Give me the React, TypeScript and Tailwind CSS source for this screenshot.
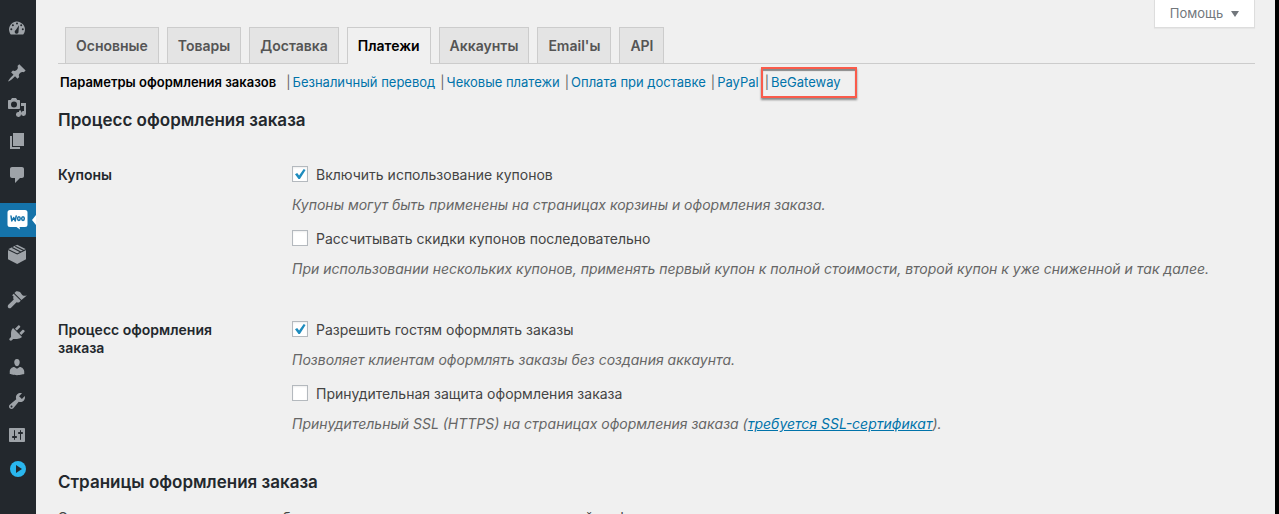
import React from "react";

type IconProps = { children: React.ReactNode; className?: string };

function Glyph({ children, className = "fill-[#9ea3a8]" }: IconProps) {
  return (
    <svg viewBox="0 0 20 20" className={`size-5 ${className}`} aria-hidden="true">
      {children}
    </svg>
  );
}

function MenuLink({ label, children }: { label: string; children: React.ReactNode }) {
  return (
    <a href="#" aria-label={label} className="flex h-[34px] w-full items-center pl-[7px]">
      {children}
    </a>
  );
}

function Sidebar() {
  return (
    <nav className="flex w-9 shrink-0 flex-col bg-[#23282d] pt-[11px]">
      <MenuLink label="Консоль">
        <Glyph>
          <path d="M3.8 16.6h12.4A8 8 0 1 0 2 11c0 2.100.7 4.100 1.800 5.600zM10 4.500a1 1 0 1 1 0 2 1 1 0 0 1 0-2zM5.900 6.300a1 1 0 1 1 0 2 1 1 0 0 1 0-2zm8.300 0a1 1 0 1 1 0 2 1 1 0 0 1 0-2zM4.300 10.200a1 1 0 1 1 0 2 1 1 0 0 1 0-2zm11.500 0a1 1 0 1 1 0 2 1 1 0 0 1 0-2zM12 7.200l-.5 6.300a1.900 1.900 0 1 1-2.700-1.400z" fillRule="evenodd" />
        </Glyph>
      </MenuLink>
      <div className="h-[11px]" />
      <MenuLink label="Записи">
        <Glyph>
          <path d="M10.440 3.020l1.820-1.820 6.360 6.350-1.830 1.820c-1.050-.68-2.480-.57-3.410.36l-.75.75c-.92.93-1.040 2.350-.35 3.410l-1.830 1.820-2.410-2.410-2.800 2.790c-.42.42-3.380 2.710-3.800 2.290s1.860-3.390 2.280-3.810l2.790-2.790L4.100 9.360l1.830-1.820c1.050.69 2.480.57 3.400-.36l.75-.75c.93-.92 1.050-2.350.36-3.410z" />
        </Glyph>
      </MenuLink>
      <MenuLink label="Медиафайлы">
        <Glyph>
          <path fillRule="evenodd" d="M13 11V4c0-.55-.45-1-1-1h-1.670L9 1H5L3.670 3H2c-.55 0-1 .45-1 1v7c0 .55.45 1 1 1h10c.55 0 1-.45 1-1zM7 4.500a3 3 0 1 1 0 6 3 3 0 0 1 0-6zM14 6h5v10.500A2.500 2.500 0 1 1 17 14V9h-3v8.500A2.500 2.500 0 1 1 12 15V13.500h2z" />
        </Glyph>
      </MenuLink>
      <MenuLink label="Страницы">
        <Glyph>
          <path d="M6 15V2h11v13H6zm-1 1h8v2H3V5h2v11z" />
        </Glyph>
      </MenuLink>
      <MenuLink label="Комментарии">
        <Glyph>
          <path d="M5 2h10c1.100 0 2 .9 2 2v7c0 1.100-.9 2-2 2h-2l-5 5v-5H5c-1.100 0-2-.9-2-2V4c0-1.100.9-2 2-2z" />
        </Glyph>
      </MenuLink>
      <div className="h-[11px]" />
      <a href="#" aria-label="WooCommerce" className="flex h-[34px] items-center bg-[#1573aa]">
        <svg viewBox="0 0 36 34" className="h-[34px] w-9" aria-hidden="true">
          <path fill="#fff" d="M10 7h15q2.500 0 2.500 2.500v12Q27.500 24 25 24h-5.500l.5 2.500-3.500-2.500H10q-2.500 0-2.500-2.500v-12Q7.500 7 10 7zM36 12v10l-4-5z" />
          <path fill="none" stroke="#1573aa" strokeWidth="1.500" strokeLinecap="round" strokeLinejoin="round" d="M11 13l.8 5 1.900-3.500 1.500 3.500 1-5" />
          <ellipse cx="18.900" cy="15.600" rx="1.300" ry="1.900" fill="none" stroke="#1573aa" strokeWidth="1.500" />
          <ellipse cx="23" cy="15.600" rx="1.300" ry="1.900" fill="none" stroke="#1573aa" strokeWidth="1.500" />
        </svg>
      </a>
      <MenuLink label="Товары">
        <Glyph>
          <path d="M10.200.8L19 5.200v10L10.200 20 1 15.200v-10z" />
          <path d="M1 5.600l9.200 4.300L19 5.600M5.200 3.600l9 4.600M8.300 2.300l8.600 4.300" fill="none" stroke="#23282d" strokeWidth="1.100" />
        </Glyph>
      </MenuLink>
      <div className="h-[11px]" />
      <MenuLink label="Внешний вид">
        <Glyph>
          <path d="M14.480 11.060L7.410 3.990l1.500-1.500c.5-.56 2.300-.47 3.510.32 1.210.8 1.430 1.280 2 2.100 1.180 1.700 2.700 2.230 5 1.600l.4.100zM6.700 4.700l7.070 7.070-1.500 1.500c-.8.500-1.900.4-2.700 0l-5.500 5.400c-.8.800-2.100.8-2.800 0s-.7-2 .1-2.800l5.400-5.400c-.6-1-.8-2-.1-2.700l-1.500-1.500z" />
        </Glyph>
      </MenuLink>
      <MenuLink label="Плагины">
        <Glyph>
          <path d="M13.110 4.360L9.870 7.600 8 5.730l3.240-3.240c.35-.34 1.050-.2 1.560.32.52.51.66 1.210.31 1.550zm-8 1.770l.91-1.120 9.010 9.010-1.190.84c-.71.71-2.630 1.160-3.820 1.160H6.140L4.900 17.260c-.59.59-1.540.59-2.120 0-.59-.58-.59-1.530 0-2.120l1.240-1.240v-3.880c0-1.130.4-3.190 1.090-3.890zm7.260 3.970l3.240-3.240c.34-.35 1.040-.21 1.550.31.52.51.66 1.210.31 1.550l-3.240 3.250z" />
        </Glyph>
      </MenuLink>
      <MenuLink label="Пользователи">
        <Glyph>
          <path d="M10 9.250c-2.270 0-2.730-3.440-2.730-3.440C7 4.020 7.820 2 9.970 2c2.160 0 2.980 2.020 2.710 3.810 0 0-.41 3.440-2.680 3.440zm0 2.570L12.720 10c2.390 0 4.520 2.330 4.520 4.530v2.490s-3.650 1.130-7.240 1.130c-3.650 0-7.240-1.130-7.240-1.130v-2.490c0-2.250 1.940-4.480 4.470-4.480z" />
        </Glyph>
      </MenuLink>
      <MenuLink label="Инструменты">
        <Glyph>
          <path d="M16.680 9.770c-1.340 1.340-3.300 1.670-4.950.99l-5.410 6.520c-.99.99-2.590.99-3.580 0s-.99-2.590 0-3.570l6.520-5.420c-.68-1.650-.35-3.610.99-4.950 1.280-1.280 3.120-1.620 4.720-1.060l-2.890 2.890 2.820 2.820 2.860-2.870c.53 1.580.18 3.390-1.080 4.650zM3.810 16.210c.4.390 1.040.39 1.430 0 .4-.4.400-1.040 0-1.430-.39-.4-1.030-.4-1.430 0-.39.39-.39 1.030 0 1.430z" />
        </Glyph>
      </MenuLink>
      <MenuLink label="Настройки">
        <Glyph>
          <path fillRule="evenodd" d="M18 16V4c0-.55-.45-1-1-1H3c-.55 0-1 .45-1 1v12c0 .55.450 1 1 1h14c.55 0 1-.45 1-1zM8 11h1c.55 0 1 .45 1 1s-.45 1-1 1H8v1.500c0 .28-.22.5-.5.500s-.5-.22-.5-.5V13H6c-.55 0-1-.45-1-1s.450-1 1-1h1V5.500c0-.28.220-.5.500-.5s.5.220.5.500V11zm5-2h-1c-.55 0-1-.45-1-1s.450-1 1-1h1V5.500c0-.28.220-.5.500-.5s.5.220.5.500V7h1c.55 0 1 .450 1 1s-.45 1-1 1h-1v5.500c0 .28-.22.500-.5.500s-.5-.22-.5-.5V9z" />
        </Glyph>
      </MenuLink>
      <MenuLink label="Свернуть меню">
        <Glyph>
          <circle cx="11" cy="10" r="8" fill="#2ab7ee" />
          <path d="M9 6l6 4-6 4z" fill="#23282d" />
        </Glyph>
      </MenuLink>
    </nav>
  );
}

const tabs = ["Основные", "Товары", "Доставка", "Платежи", "Аккаунты", "Email'ы", "API"];
const sections = ["Безналичный перевод", "Чековые платежи", "Оплата при доставке", "PayPal"];

function Option({ label, note, checked = false }: { label: string; note: React.ReactNode; checked?: boolean }) {
  return (
    <div className="flex flex-col">
      <label className="flex h-6 items-start gap-2 leading-[22px]">
        <span className="relative mt-0.5 flex size-4">
          <input
            type="checkbox"
            defaultChecked={checked}
            className="peer size-4 appearance-none border border-[#b4b9be] bg-white shadow-[inset_0_1px_2px_rgba(0,0,0,0.07)]"
          />
          <svg viewBox="0 0 16 16" className="pointer-events-none absolute inset-0 hidden size-4 peer-checked:block" aria-hidden="true">
            <path d="M3 8.300l2.200-1.200 1.900 2.300L11.700 3l1.900.9L7.900 13H6.500z" fill="#1e8cbe" />
          </svg>
        </span>
        {label}
      </label>
      <p className="mt-[7px] text-[#666] italic leading-5">{note}</p>
    </div>
  );
}

export default function App() {
  return (
    <div className="flex h-screen overflow-hidden border-r-4 border-black bg-[#f0f0f0] font-[Inter,sans-serif] text-sm text-[#444]">
      <Sidebar />
      <main className="flex min-w-0 grow flex-col pr-5 pl-[22px]">
        <div className="flex h-7 justify-end">
          <button className="flex h-7 w-[101px] items-center justify-center gap-2 border border-t-0 border-[#ddd] bg-white text-[13px] text-[#72777c] shadow-[0_1px_1px_rgba(0,0,0,0.04)]">
            Помощь
            <svg viewBox="0 0 8 6" className="h-1.5 w-2 fill-[#72777c]" aria-hidden="true">
              <path d="M0 0h8L4 6z" />
            </svg>
          </button>
        </div>
        <nav className="flex h-9 shrink-0 items-end gap-2 border-b border-[#ccc] pl-[7px] font-semibold">
          {tabs.map((tab) => (
            <a
              key={tab}
              href="#"
              className={
                tab === "Платежи"
                  ? "-mb-px flex h-[37px] items-center border border-b-0 border-[#ccc] bg-[#f0f0f0] px-2.5 pb-px text-black"
                  : "flex h-9 items-center border border-b-0 border-[#ccc] bg-[#e4e4e4] px-2.5 text-[#555]"
              }
            >
              {tab}
            </a>
          ))}
        </nav>
        <div className="flex h-9 shrink-0 items-center gap-0.5 pl-0.5 text-[13px] whitespace-nowrap text-[#666]">
          <a href="#" className="mr-2 font-semibold text-black">Параметры оформления заказов</a>
          {sections.map((section) => (
            <React.Fragment key={section}>
              <span>|</span>
              <a href="#" className="mr-[3px] text-[#0073aa] last-of-type:mr-0">{section}</a>
            </React.Fragment>
          ))}
          <span className="flex h-[31px] items-center gap-0.5 border-2 border-[#fa5b4b] pr-3.5 pl-0.5 shadow-[0_2px_2px_#888,inset_0_2px_1px_#888]">
            <span>|</span>
            <a href="#" className="text-[#0073aa]">BeGateway</a>
          </span>
        </div>
        <h2 className="mt-2 text-[17px] leading-6 font-semibold text-[#23282d]">Процесс оформления заказа</h2>
        <section className="mt-8 flex">
          <h3 className="w-[234px] shrink-0 pt-0.5 pr-10 leading-[18px] font-semibold text-[#23282d]">Купоны</h3>
          <div className="flex flex-col gap-[13px]">
            <Option checked label="Включить использование купонов" note="Купоны могут быть применены на страницах корзины и оформления заказа." />
            <Option label="Рассчитывать скидки купонов последовательно" note="При использовании нескольких купонов, применять первый купон к полной стоимости, второй купон к уже сниженной и так далее." />
          </div>
        </section>
        <section className="mt-10 flex">
          <h3 className="w-[234px] shrink-0 pt-0.5 pr-10 leading-[18px] font-semibold text-[#23282d]">Процесс оформления заказа</h3>
          <div className="flex flex-col gap-[13px]">
            <Option checked label="Разрешить гостям оформлять заказы" note="Позволяет клиентам оформлять заказы без создания аккаунта." />
            <Option
              label="Принудительная защита оформления заказа"
              note={<>Принудительный SSL (HTTPS) на страницах оформления заказа (<a href="#" className="text-[#0073aa] underline">требуется SSL-сертификат</a>).</>}
            />
          </div>
        </section>
        <h2 className="mt-9 text-[17px] leading-6 font-semibold text-[#23282d]">Страницы оформления заказа</h2>
        <p className="mt-3.5 leading-5">Эти страницы нужно задать, чтобы магазин знал, куда перенаправить людей к оформлению заказа.</p>
      </main>
    </div>
  );
}
